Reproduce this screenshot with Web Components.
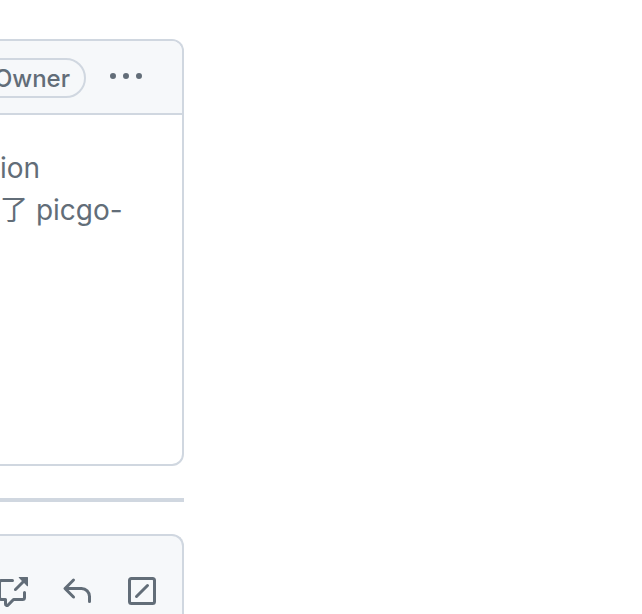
<!DOCTYPE html>
<html lang="zh">
<head>
<meta charset="utf-8">
<title>Discussion</title>
<style>
body { margin: 0; background: #fff; color: #626d78; font-family: Inter, "Noto Sans CJK SC", sans-serif; --line: #d0d7e0; --muted: #f6f8fa; overflow: hidden; }
</style>
</head>
<body>
<discussion-page>
  <comment-card>
    <owner-label slot="header">Owner</owner-label>
    <icon-button slot="header" icon="kebab" label="Show options"></icon-button>
    <div>ion</div>
    <div>了 picgo-</div>
  </comment-card>
  <editor-card></editor-card>
</discussion-page>
<script>
const icons = {
  kebab: '<path d="M8 9a1.5 1.5 0 1 0 0-3 1.5 1.5 0 0 0 0 3ZM1.5 9a1.5 1.5 0 1 0 0-3 1.5 1.5 0 0 0 0 3Zm13 0a1.5 1.5 0 1 0 0-3 1.5 1.5 0 0 0 0 3Z"/>',
  reference: '<path d="M2.75 3.5a.25.25 0 0 0-.25.25v7.5c0 .138.112.25.25.25h2a.75.75 0 0 1 .75.75v2.19l2.72-2.72a.749.749 0 0 1 .53-.22h4.5a.25.25 0 0 0 .25-.25v-2.5a.75.75 0 0 1 1.5 0v2.5A1.75 1.75 0 0 1 13.25 13H9.06l-2.573 2.573A1.458 1.458 0 0 1 4 14.543V13H2.75A1.75 1.75 0 0 1 1 11.25v-7.5C1 2.784 1.784 2 2.75 2h5.5a.75.75 0 0 1 0 1.5ZM16 1.25v4.146a.25.25 0 0 1-.427.177L14.03 4.03l-3.75 3.75a.749.749 0 0 1-1.275-.326.749.749 0 0 1 .215-.734l3.75-3.75-1.543-1.543A.25.25 0 0 1 11.604 1h4.146a.25.25 0 0 1 .25.25Z"/>',
  reply: '<path d="M6.78 1.97a.75.75 0 0 1 0 1.06L3.81 6h6.44A4.75 4.75 0 0 1 15 10.75v2.5a.75.75 0 0 1-1.5 0v-2.5a3.25 3.25 0 0 0-3.25-3.25H3.81l2.97 2.97a.749.749 0 0 1-.326 1.275.749.749 0 0 1-.734-.215L1.47 7.28a.75.75 0 0 1 0-1.06l4.25-4.25a.75.75 0 0 1 1.06 0Z"/>',
  slash: '<rect x="1.75" y="1.75" width="12.5" height="12.5" rx="1" fill="none" stroke="currentColor" stroke-width="1.5"/><path d="m5.25 10.75 5.5-5.5" fill="none" stroke="currentColor" stroke-width="1.5" stroke-linecap="round"/>'
};
const define = (name, render) => customElements.define(name, class extends HTMLElement {
  constructor() {
    super();
    this.attachShadow({ mode: 'open' });
  }
  connectedCallback() { this.shadowRoot.innerHTML = render(this); }
});
define('icon-button', el => `
  <style>
    :host { display: block; flex: none; }
    button { display: flex; align-items: center; height: 38px; padding: 0; border: 0; background: none; color: inherit; cursor: pointer; }
    svg { display: block; overflow: visible; }
  </style>
  <button type="button" aria-label="${el.getAttribute('label')}"><svg width="32" height="32" viewBox="0 0 16 16" fill="currentColor" aria-hidden="true">${icons[el.getAttribute('icon')]}</svg></button>`);
define('owner-label', () => `
  <style>
    :host { display: block; flex: none; box-sizing: border-box; border: 2px solid var(--line); border-radius: 20px; padding: 1px 14px 0; font-size: 24px; font-weight: 500; line-height: 35px; }
  </style><slot></slot>`);
define('comment-card', () => `
  <style>
    :host { display: block; border: 2px solid var(--line); border-left: 0; border-radius: 0 12px 12px 0; overflow: hidden; }
    header { display: flex; justify-content: flex-end; align-items: flex-start; gap: 24px; padding: 17px 40px 15px 0; background: var(--muted); border-bottom: 2px solid var(--line); }
    section { min-height: 285px; padding: 32px 32px 32px 0; font-size: 28px; line-height: 42px; }
  </style>
  <header><slot name="header"></slot></header>
  <section><slot></slot></section>`);
define('editor-card', () => `
  <style>
    :host { display: block; border: 2px solid var(--line); border-left: 0; border-bottom: 0; border-radius: 0 12px 0 0; background: var(--muted); overflow: hidden; }
    nav { display: flex; justify-content: flex-end; gap: 33px; padding: 36px 24px 32px 0; }
  </style>
  <nav aria-label="Formatting">
    <icon-button icon="reference" label="Reference"></icon-button>
    <icon-button icon="reply" label="Saved replies"></icon-button>
    <icon-button icon="slash" label="Slash commands"></icon-button>
  </nav>`);
define('discussion-page', () => `
  <style>
    :host { display: grid; grid-template-columns: minmax(0, 1fr) 458px; height: 100vh; overflow: hidden; }
    main { padding-top: 39px; display: flex; flex-direction: column; gap: 32px; }
    hr { width: 100%; height: 4px; margin: 0; border: 0; background: var(--line); flex: none; order: 1; }
    ::slotted(*) { flex: none; }
    ::slotted(editor-card) { order: 2; }
  </style>
  <main><slot></slot><hr></main>`);
</script>
</body>
</html>
